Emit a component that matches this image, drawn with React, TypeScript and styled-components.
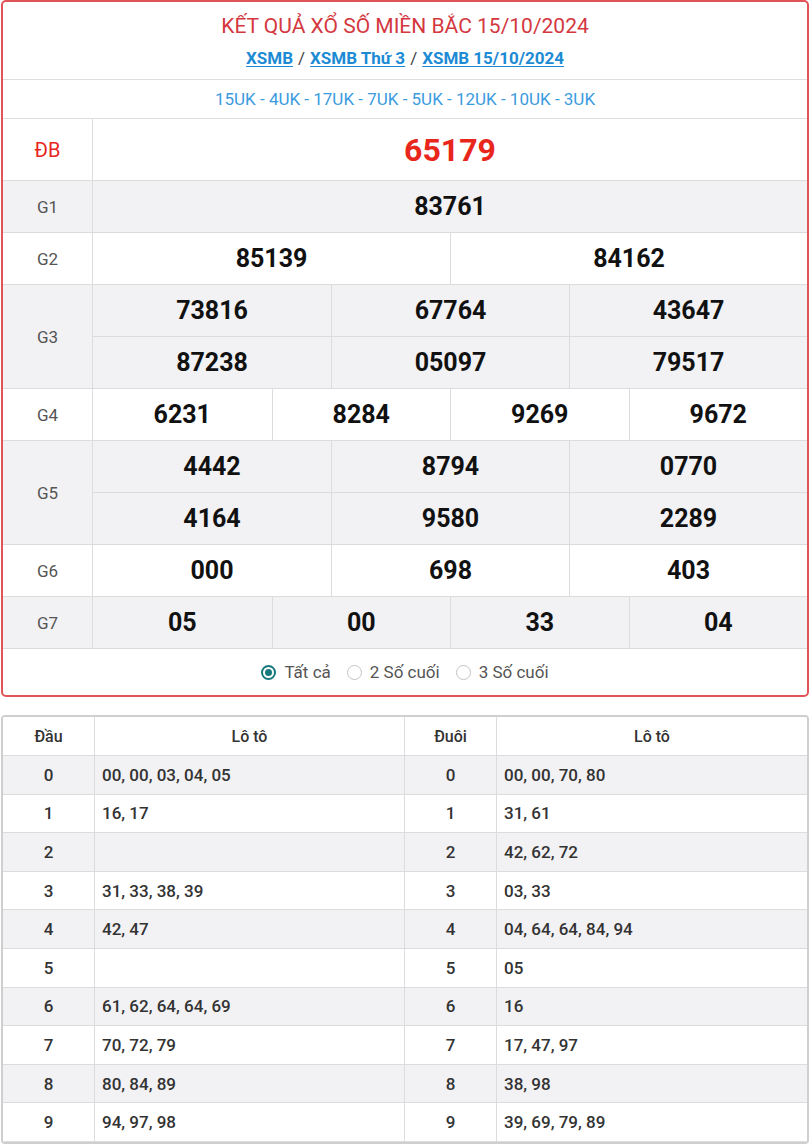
import React from "react";
import styled, { createGlobalStyle } from "styled-components";

const Global = createGlobalStyle`
  html, body { margin: 0; padding: 0; background: #fff; }
  body { font-family: Roboto, "Noto Sans", Arial, sans-serif; color: #222; }
`;

const Page = styled.div`
  width: 810px;
  padding: 0 1px;
  box-sizing: border-box;
`;

const ResultCard = styled.section`
  border: 2px solid #e05458;
  border-radius: 5px;
  overflow: hidden;
  background: #fff;
`;

const TitleBlock = styled.div`
  padding: 10px 0 9px;
  border-bottom: 1px solid #dedede;
  text-align: center;
`;

const Title = styled.h1`
  margin: 0;
  font-size: 21px;
  line-height: 28px;
  font-weight: 400;
  color: #d4383f;
`;

const Crumbs = styled.div`
  margin-top: 6px;
  line-height: 24px;
  font-size: 17px;
  font-weight: 700;
  color: #333;
`;

const Crumb = styled.a`
  color: #1d8bd4;
  text-decoration: underline;
  text-underline-offset: 2px;
`;

const Sep = styled.span`
  font-weight: 400;
  margin: 0 5px;
  color: #444;
`;

const Codes = styled.div`
  height: 38px;
  line-height: 38px;
  text-align: center;
  font-size: 17px;
  color: #3b9be0;
  border-bottom: 1px solid #dedede;
`;

const PrizeRow = styled.div<{ $alt?: boolean }>`
  display: flex;
  border-bottom: 1px solid #dcdcdc;
  background: ${(p) => (p.$alt ? "#f2f1f4" : "#fff")};
`;

const Label = styled.div<{ $special?: boolean }>`
  width: 89px;
  flex: none;
  border-right: 1px solid #dcdcdc;
  display: flex;
  align-items: center;
  justify-content: center;
  font-size: ${(p) => (p.$special ? "20px" : "17px")};
  color: ${(p) => (p.$special ? "#e8261c" : "#555")};
`;

const Values = styled.div<{ $cols: number }>`
  flex: 1;
  display: grid;
  grid-template-columns: repeat(${(p) => p.$cols}, 1fr);
`;

const Num = styled.div<{ $cols: number; $special?: boolean }>`
  height: ${(p) => (p.$special ? "61px" : "51px")};
  display: flex;
  align-items: center;
  justify-content: center;
  font-weight: 700;
  font-size: ${(p) => (p.$special ? "32px" : "25px")};
  color: ${(p) => (p.$special ? "#e8261c" : "#111")};
  border-left: 1px solid #dcdcdc;
  &:nth-child(${(p) => p.$cols}n + 1) {
    border-left: none;
  }
  &:nth-child(n + ${(p) => p.$cols + 1}) {
    border-top: 1px solid #dcdcdc;
  }
`;

const Filter = styled.div`
  height: 46px;
  display: flex;
  align-items: center;
  justify-content: center;
  gap: 16px;
  font-size: 17px;
  color: #555;
`;

const Option = styled.label`
  display: flex;
  align-items: center;
  gap: 8px;
`;

const Radio = styled.span<{ $on?: boolean }>`
  width: 15px;
  height: 15px;
  border-radius: 50%;
  box-sizing: border-box;
  border: ${(p) => (p.$on ? "2px solid #167a7c" : "1px solid #c4c4c4")};
  display: flex;
  align-items: center;
  justify-content: center;
  &::after {
    content: "";
    width: 7px;
    height: 7px;
    border-radius: 50%;
    background: ${(p) => (p.$on ? "#167a7c" : "transparent")};
  }
`;

const LotoCard = styled.section`
  margin-top: 18px;
  border: 2px solid #cfcfcf;
  border-radius: 4px;
  overflow: hidden;
`;

const LotoGrid = styled.div`
  display: grid;
  grid-template-columns: 92px 1fr 92px 1fr;
`;

const LCell = styled.div<{ $head?: boolean; $alt?: boolean; $list?: boolean }>`
  height: ${(p) => (p.$head ? "39px" : "38.6px")};
  box-sizing: border-box;
  display: flex;
  align-items: center;
  justify-content: ${(p) => (p.$list && !p.$head ? "flex-start" : "center")};
  padding-left: ${(p) => (p.$list && !p.$head ? "7px" : "0")};
  background: ${(p) => (p.$alt ? "#f2f1f4" : "#fff")};
  border-bottom: 1px solid #dcdcdc;
  border-right: 1px solid #dcdcdc;
  font-size: ${(p) => (p.$head ? "16px" : "17px")};
  font-weight: 500;
  color: #333;
  &:nth-child(4n) {
    border-right: none;
  }
`;

const prizes: { label: string; cols: number; nums: string[]; special?: boolean }[] = [
  { label: "ĐB", cols: 1, nums: ["65179"], special: true },
  { label: "G1", cols: 1, nums: ["83761"] },
  { label: "G2", cols: 2, nums: ["85139", "84162"] },
  { label: "G3", cols: 3, nums: ["73816", "67764", "43647", "87238", "05097", "79517"] },
  { label: "G4", cols: 4, nums: ["6231", "8284", "9269", "9672"] },
  { label: "G5", cols: 3, nums: ["4442", "8794", "0770", "4164", "9580", "2289"] },
  { label: "G6", cols: 3, nums: ["000", "698", "403"] },
  { label: "G7", cols: 4, nums: ["05", "00", "33", "04"] },
];

const dau = [
  "00, 00, 03, 04, 05",
  "16, 17",
  "",
  "31, 33, 38, 39",
  "42, 47",
  "",
  "61, 62, 64, 64, 69",
  "70, 72, 79",
  "80, 84, 89",
  "94, 97, 98",
];
const duoi = [
  "00, 00, 70, 80",
  "31, 61",
  "42, 62, 72",
  "03, 33",
  "04, 64, 64, 84, 94",
  "05",
  "16",
  "17, 47, 97",
  "38, 98",
  "39, 69, 79, 89",
];

export default function App() {
  return (
    <Page>
      <Global />
      <ResultCard>
        <TitleBlock>
          <Title>KẾT QUẢ XỔ SỐ MIỀN BẮC 15/10/2024</Title>
          <Crumbs>
            <Crumb>XSMB</Crumb>
            <Sep>/</Sep>
            <Crumb>XSMB Thứ 3</Crumb>
            <Sep>/</Sep>
            <Crumb>XSMB 15/10/2024</Crumb>
          </Crumbs>
        </TitleBlock>
        <Codes>15UK - 4UK - 17UK - 7UK - 5UK - 12UK - 10UK - 3UK</Codes>
        {prizes.map((p, i) => (
          <PrizeRow key={p.label} $alt={i % 2 === 1}>
            <Label $special={p.special}>{p.label}</Label>
            <Values $cols={p.cols}>
              {p.nums.map((n, j) => (
                <Num key={j} $cols={p.cols} $special={p.special}>
                  {n}
                </Num>
              ))}
            </Values>
          </PrizeRow>
        ))}
        <Filter>
          <Option>
            <Radio $on />
            Tất cả
          </Option>
          <Option>
            <Radio />2 Số cuối
          </Option>
          <Option>
            <Radio />3 Số cuối
          </Option>
        </Filter>
      </ResultCard>
      <LotoCard>
        <LotoGrid>
          <LCell $head>Đầu</LCell>
          <LCell $head $list>Lô tô</LCell>
          <LCell $head>Đuôi</LCell>
          <LCell $head $list>Lô tô</LCell>
          {dau.map((d, i) => (
            <React.Fragment key={i}>
              <LCell $alt={i % 2 === 0}>{i}</LCell>
              <LCell $alt={i % 2 === 0} $list>{d}</LCell>
              <LCell $alt={i % 2 === 0}>{i}</LCell>
              <LCell $alt={i % 2 === 0} $list>{duoi[i]}</LCell>
            </React.Fragment>
          ))}
        </LotoGrid>
      </LotoCard>
    </Page>
  );
}
